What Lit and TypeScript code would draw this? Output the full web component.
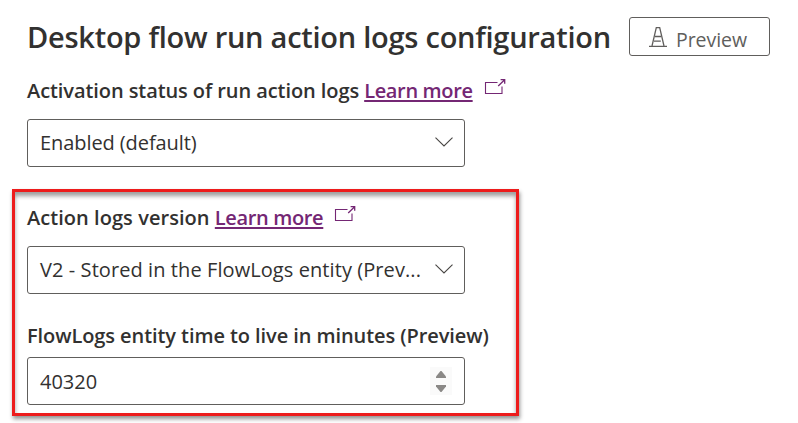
import { LitElement, html, css } from "lit";
import { customElement } from "lit/decorators.js";

const external = html`<svg class="ext" width="22" height="18" viewBox="0 0 22 18" fill="none" stroke="#742774">
  <path d="M13.5 4.5H1.5V15.5H18V8.5" stroke-width="1.1"/>
  <path d="M14.2 8L20.4 2M16.6 1.7H20.7V5.8" stroke-width="1.3"/>
</svg>`;

const chevron = html`<svg class="chev" width="18" height="10" viewBox="0 0 18 10" fill="none" stroke="#484644">
  <path d="M.5 .6L9 9L17.5 .6" stroke-width="1.1"/>
</svg>`;

const cone = html`<svg class="cone" width="18" height="20" viewBox="0 0 18 20" fill="none" stroke="#605e5c">
  <path d="M0 19.4H18" stroke-width="1.3"/>
  <path d="M3 19L7.3 .7H10.7L15 19M6 9.5H12M5 14.2H11.8" stroke-width="1.3"/>
</svg>`;

@customElement("app-root")
export class AppRoot extends LitElement {
  static styles = css`
    :host {
      display: block;
      box-sizing: border-box;
      width: 798px;
      height: 423px;
      padding: 17px 28px 0 12px;
      overflow: hidden;
      background: #fff;
      color: #323130;
      font-family: "Open Sans", "Noto Sans", sans-serif;
      font-size: 20px;
    }
    * { box-sizing: border-box; }
    .head {
      display: flex;
      justify-content: space-between;
      height: 39px;
      padding-left: 15px;
    }
    h1 {
      margin: 0;
      font-size: 29px;
      font-weight: 600;
      line-height: 40px;
      letter-spacing: -0.25px;
      white-space: nowrap;
    }
    .preview {
      display: flex;
      width: 141px;
      height: 39px;
      padding: 0 0 0 19px;
      border: 1px solid #605e5c;
      border-radius: 3px;
      background: #fff;
      color: #605e5c;
      font: inherit;
      font-size: 19.5px;
      line-height: 43px;
      letter-spacing: -0.05px;
    }
    .cone { margin: 9px 9px 0 0; flex: none; }
    .first { padding: 20px 0 0 15px; }
    .group {
      width: 507px;
      height: 227px;
      margin-top: 22px;
      padding: 11px 0 0 12px;
      border: 3px solid #ed1c1c;
      box-shadow: 1px 3px 4px rgba(0, 0, 0, .42), inset 0 4px 4px rgba(0, 0, 0, .38);
    }
    .label {
      display: flex;
      height: 28px;
      line-height: 30px;
      font-weight: 600;
      letter-spacing: -0.08px;
      white-space: pre;
    }
    .l2 { letter-spacing: 0.05px; }
    a {
      color: #742774;
      letter-spacing: -0.35px;
      text-decoration: underline;
      text-decoration-thickness: 2px;
      text-underline-offset: 2px;
      text-decoration-skip-ink: none;
    }
    .ext { margin: 2px 0 0 11px; }
    .box {
      display: flex;
      justify-content: space-between;
      width: 438px;
      height: 48px;
      margin-top: 15px;
      padding: 0 11px 0 12px;
      border: 1px solid #605e5c;
      border-radius: 3px;
      line-height: 46px;
      white-space: nowrap;
    }
    .group .ttl { margin-top: 27px; }
    .group .ttl + .box { margin-top: 8px; line-height: 48px; }
    .v1 { letter-spacing: -0.08px; }
    .v2 { letter-spacing: 0.08px; }
    .chev { margin-top: 17px; }
    .spin {
      width: 22px;
      height: 28px;
      margin: 9px 1px 0 0;
      background: #fafafa;
    }
  `;

  render() {
    return html`
      <header class="head">
        <h1>Desktop flow run action logs configuration</h1>
        <button class="preview">${cone}<span>Preview</span></button>
      </header>
      <section class="first">
        <div class="label"><span>Activation status of run action logs </span><a>Learn more</a>${external}</div>
        <div class="box"><span class="v1">Enabled (default)</span>${chevron}</div>
      </section>
      <section class="group">
        <div class="label"><span class="l2">Action logs version </span><a>Learn more</a>${external}</div>
        <div class="box"><span class="v2">V2 - Stored in the FlowLogs entity (Prev...</span>${chevron}</div>
        <div class="label ttl"><span>FlowLogs entity time to live in minutes (Preview)</span></div>
        <div class="box">
          <span>40320</span>
          <svg class="spin" viewBox="0 0 22 28" fill="#8a8886">
            <path d="M10.5 4H11.5L16 9.5V11H6V9.5Z"/>
            <path d="M10.5 25H11.5L16 19.5V18H6V19.5Z"/>
          </svg>
        </div>
      </section>
    `;
  }
}
